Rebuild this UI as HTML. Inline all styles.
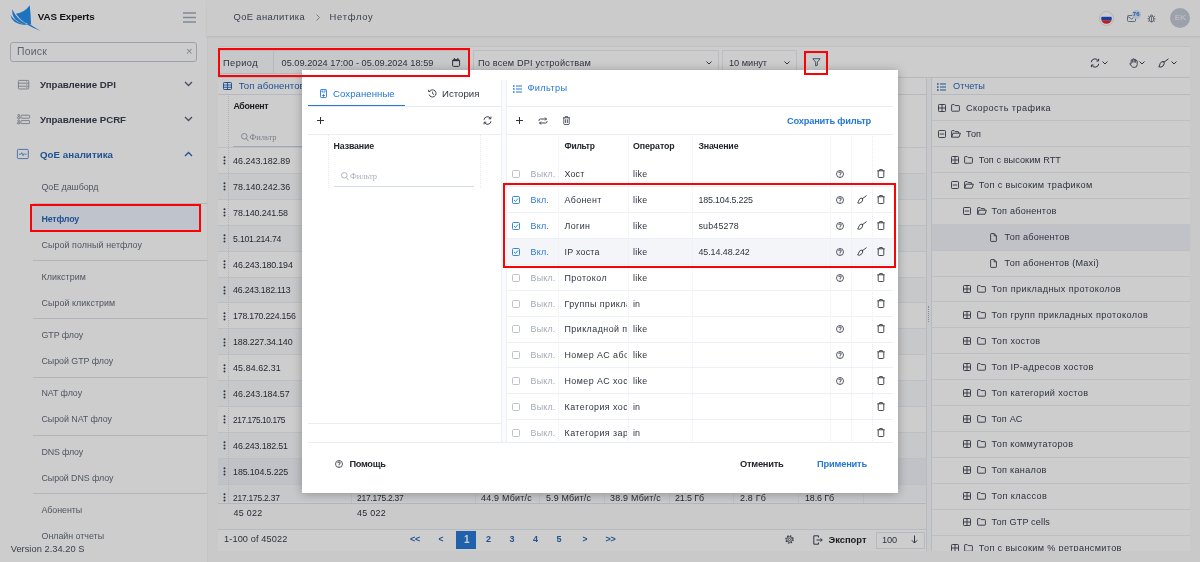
<!DOCTYPE html>
<html lang="ru">
<head>
<meta charset="utf-8">
<title>QoE аналитика - Нетфлоу</title>
<style>
*{box-sizing:border-box;margin:0;padding:0}
html,body{width:1200px;height:562px;overflow:hidden}
body{font-family:"Liberation Sans",sans-serif;font-size:10px;color:#2f3440;background:#fafafb;position:relative}
.abs{position:absolute}
.t{position:absolute;white-space:nowrap;line-height:12px}
svg{position:absolute;overflow:visible}
#side,#head,#card,#modal{will-change:transform}
#side{position:absolute;left:0;top:0;width:207.5px;height:562px;background:#fff;border-right:1.5px solid #f3f3f5}
#side .sep{position:absolute;left:33px;width:174px;height:1px;background:#dfe2e8}
#head{position:absolute;left:207px;top:0;width:993px;height:36px;background:#fdfdfd;box-shadow:0 1px 2px rgba(0,0,0,.09)}
#card{position:absolute;left:218px;top:46px;width:972px;height:505px;background:#fff;overflow:hidden}
#ov{position:absolute;left:0;top:0;width:1200px;height:562px;background:rgba(0,0,0,.195)}
#modal{position:absolute;left:302px;top:70px;width:596px;height:423px;background:#fff;box-shadow:0 1px 9px rgba(0,0,0,.28)}
#modal .in{position:absolute;left:0;top:0;width:100%;height:100%;overflow:hidden}
.red{position:absolute;border:2.2px solid #fb0207}
</style>
</head>
<body>
<div id="side">
<svg style="left:0;top:0" width="45" height="36" viewBox="0 0 45 36"><g fill="#2690ee"><path d="M29.700 5.300Q24.500 12.600 15.900 13.800Q19.800 19.400 24.200 22.300Q27.300 24.200 31.100 24.600Q30.800 14 29.700 5.300Z"/><path d="M28.500 23.200Q34.500 27.600 40.900 30.900Q33 28.300 26.500 24.300Z"/><path d="M12.300 9.300Q15.200 16 20.200 19.900Q23.400 22.400 27.200 24.600L24.300 24.700Q18.600 22.700 15.400 19.500Q11.600 15.600 12.300 9.300Z"/><path d="M10.200 15.100Q13.800 19.600 18 22.100Q21 23.800 25 24.700L25.500 25.200Q19.300 24.900 14.800 22Q11.400 19.700 10.200 15.100Z"/></g></svg>
<div class="t" style="left:37.8px;top:11.2px;font-size:9.8px;color:#15171c;font-weight:700;letter-spacing:-0.13px;">VAS Experts</div>
<svg style="left:183px;top:12px" width="13" height="11" viewBox="0 0 13 11"><path d="M0 1H13M0 5.500H13M0 10H13" stroke="#a4abb8" stroke-width="1.400" fill="none"/></svg>
<div class="abs" style="left:10px;top:42px;width:187px;height:20px;border:1px solid #c3cad6;border-radius:3px"></div>
<div class="t" style="left:17px;top:46px;font-size:10.4px;color:#737b8c;letter-spacing:0.24px;">Поиск</div>
<div class="t" style="left:186px;top:45px;font-size:11px;color:#9aa1ae;">×</div>
<svg style="left:17.800px;top:79.500px" width="11.2" height="9.4" viewBox="0 0 11.2 9.4"><rect x=".4" y=".4" width="10.400" height="8.600" rx="1" fill="none" stroke="#858b9a" stroke-width=".8"/><path d="M.4 3.200H10.800M.4 6.200H10.800" stroke="#858b9a" stroke-width=".8"/><path d="M8.300 1.800H9.300M8.300 4.700H9.300M8.300 7.600H9.300" stroke="#858b9a" stroke-width=".7"/></svg>
<div class="t" style="left:40px;top:78.8px;font-size:9.7px;color:#3b4150;font-weight:700;letter-spacing:-0.01px;">Управление DPI</div>
<svg style="left:184px;top:81px" width="9" height="6" viewBox="0 0 9 6"><path d="M1 1L4.500 4.500L8 1" fill="none" stroke="#5b6170" stroke-width="1.300"/></svg>
<svg style="left:17px;top:114.300px" width="13" height="10.4" viewBox="0 0 13 10.400"><g fill="none" stroke="#858b9a" stroke-width=".8"><rect x="4" y="1.200" width="8.600" height="3" rx=".6"/><rect x="4" y="6.600" width="8.600" height="3" rx=".6"/><circle cx="1.700" cy="1.300" r=".9"/><path d="M.4 4.300V3.600Q.4 2.700 1.700 2.700Q3 2.700 3 3.600V4.300Z"/><circle cx="1.700" cy="6.700" r=".9"/><path d="M.4 9.700V9Q.4 8.100 1.700 8.100Q3 8.100 3 9V9.700Z"/></g></svg>
<div class="t" style="left:40px;top:113.8px;font-size:9.7px;color:#3b4150;font-weight:700;letter-spacing:-0.02px;">Управление PCRF</div>
<svg style="left:184px;top:116px" width="9" height="6" viewBox="0 0 9 6"><path d="M1 1L4.500 4.500L8 1" fill="none" stroke="#5b6170" stroke-width="1.300"/></svg>
<svg style="left:17.300px;top:149px" width="11.7" height="10" viewBox="0 0 11.7 10"><rect x=".4" y=".4" width="10.900" height="9.200" rx="1" fill="none" stroke="#3a78c8" stroke-width=".8"/><path d="M2 5.200H4L4.800 3.600L6 6.700L7 4.600L7.600 5.200H9.700" stroke="#3a78c8" stroke-width=".7" fill="none"/></svg>
<div class="t" style="left:40px;top:148.8px;font-size:9.7px;color:#2a66b8;font-weight:700;letter-spacing:0.06px;">QoE аналитика</div>
<svg style="left:184px;top:151px" width="9" height="6" viewBox="0 0 9 6"><path d="M1 5L4.500 1.500L8 5" fill="none" stroke="#2a66b8" stroke-width="1.300"/></svg>
<div class="t" style="left:41.5px;top:180.5px;font-size:8.9px;color:#666c7a;letter-spacing:-0.04px;">QoE дашборд</div>
<div class="sep" style="top:203px"></div>
<div class="abs" style="left:32px;top:206px;width:168px;height:25px;background:#eef3fd"></div>
<div class="t" style="left:41.5px;top:212.5px;font-size:8.9px;color:#2a66b8;font-weight:700;letter-spacing:-0.20px;">Нетфлоу</div>
<div class="t" style="left:41.5px;top:238.5px;font-size:8.9px;color:#666c7a;letter-spacing:0.09px;">Сырой полный нетфлоу</div>
<div class="sep" style="top:260px"></div>
<div class="t" style="left:41.5px;top:271px;font-size:8.9px;color:#666c7a;letter-spacing:0.06px;">Кликстрим</div>
<div class="t" style="left:41.5px;top:297px;font-size:8.9px;color:#666c7a;letter-spacing:0.07px;">Сырой кликстрим</div>
<div class="sep" style="top:318px"></div>
<div class="t" style="left:41.5px;top:329px;font-size:8.9px;color:#666c7a;letter-spacing:-0.09px;">GTP флоу</div>
<div class="t" style="left:41.5px;top:355px;font-size:8.9px;color:#666c7a;letter-spacing:-0.04px;">Сырой GTP флоу</div>
<div class="sep" style="top:377px"></div>
<div class="t" style="left:41.5px;top:387.3px;font-size:8.9px;color:#666c7a;letter-spacing:-0.07px;">NAT флоу</div>
<div class="t" style="left:41.5px;top:413.4px;font-size:8.9px;color:#666c7a;letter-spacing:-0.05px;">Сырой NAT флоу</div>
<div class="sep" style="top:435px"></div>
<div class="t" style="left:41.5px;top:445.7px;font-size:8.9px;color:#666c7a;letter-spacing:-0.17px;">DNS флоу</div>
<div class="t" style="left:41.5px;top:471.8px;font-size:8.9px;color:#666c7a;letter-spacing:-0.08px;">Сырой DNS флоу</div>
<div class="sep" style="top:493px"></div>
<div class="t" style="left:41.5px;top:504px;font-size:8.9px;color:#666c7a;letter-spacing:-0.08px;">Абоненты</div>
<div class="t" style="left:41.5px;top:529.8px;font-size:8.9px;color:#666c7a;letter-spacing:-0.02px;">Онлайн отчеты</div>
<div class="abs" style="left:0;top:538.500px;width:206px;height:23.500px;background:#fff"></div>
<div class="t" style="left:10.7px;top:543px;font-size:9.3px;color:#4b5160;letter-spacing:0.02px;">Version 2.34.20 S</div>
</div>
<div id="head">
<div class="t" style="left:26.5px;top:11px;font-size:9.4px;color:#4a5060;letter-spacing:0.37px;">QoE аналитика</div>
<svg style="left:109px;top:14.300px" width="4" height="7" viewBox="0 0 4 7"><path d="M.5 .5L3.500 3.500L.5 6.500" fill="none" stroke="#8d93a0" stroke-width=".9"/></svg>
<div class="t" style="left:122.5px;top:11px;font-size:9.4px;color:#4a5060;letter-spacing:0.73px;">Нетфлоу</div>
<svg style="left:892px;top:10.5px" width="15" height="15" viewBox="0 0 15 15"><circle cx="7.500" cy="7.500" r="7" fill="#fff" stroke="#c9ced8" stroke-width=".6"/><clipPath id="fc"><circle cx="7.500" cy="7.500" r="5.300"/></clipPath><g clip-path="url(#fc)"><rect x="0" y="0" width="15" height="5.800" fill="#fff"/><rect x="0" y="5.800" width="15" height="3.400" fill="#1f4fc4"/><rect x="0" y="9.200" width="15" height="6" fill="#e0282e"/></g></svg>
<svg style="left:920px;top:15px" width="9" height="7" viewBox="0 0 9 7"><rect x=".5" y=".5" width="8" height="6" rx="1" fill="none" stroke="#6b7282" stroke-width=".9"/><path d="M1 1.500L4.500 4L8 1.500" fill="none" stroke="#6b7282" stroke-width=".9"/></svg>
<div class="abs" style="left:924.5px;top:10px;width:9px;height:9px;border-radius:50%;background:#d5e6fb"></div>
<div class="t" style="left:925.8px;top:8.2px;font-size:6px;color:#2f73d0;font-weight:700;">76</div>
<svg style="left:939.5px;top:13px" width="9" height="10" viewBox="0 0 9 10"><ellipse cx="4.500" cy="6" rx="2.300" ry="3" fill="none" stroke="#6b7282" stroke-width=".9"/><path d="M3 2.800Q4.500 .8 6 2.800M.5 5.800H2.200M6.800 5.800H8.500M1 8.500L2.500 7.500M8 8.500L6.500 7.500M1 3L2.500 4M8 3L6.500 4M4.500 3.500V9" fill="none" stroke="#6b7282" stroke-width=".8"/></svg>
<div class="abs" style="left:962.7px;top:7.7px;width:20.600px;height:20.600px;border-radius:50%;background:#c3c9d6"></div>
<div class="t" style="left:967.8px;top:12px;font-size:8px;color:#e6e9ef;font-weight:700;">EK</div>
</div>
<div id="card">
<div class="abs" style="left:0;top:0;width:972px;height:1px;background:#eef0f4"></div>
<div class="abs" style="left:0;top:4px;width:251px;height:24px;background:#f8f9fb;border:1px solid #e3e6ec"></div>
<div class="abs" style="left:55px;top:4px;width:1px;height:24px;background:#e3e6ec"></div>
<div class="t" style="left:5px;top:10.8px;font-size:9.2px;color:#3b4150;letter-spacing:0.46px;">Период</div>
<div class="t" style="left:63.5px;top:10.8px;font-size:9.2px;color:#3b4150;letter-spacing:0.02px;">05.09.2024 17:00 - 05.09.2024 18:59</div>
<svg style="left:233.8px;top:11.8px" width="8.2" height="9" viewBox="0 0 8.2 9"><rect x=".6" y="1.600" width="7" height="6.800" rx="1" fill="none" stroke="#3b4150" stroke-width="1"/><path d="M.6 2.600H7.600" stroke="#3b4150" stroke-width="1.200"/><path d="M2.400 0V1.800M5.800 0V1.800" stroke="#3b4150" stroke-width="1"/></svg>
<div class="abs" style="left:255px;top:4px;width:246px;height:24px;border:1px solid #e9ebf0"></div>
<div class="t" style="left:260px;top:10.8px;font-size:9.2px;color:#3b4150;letter-spacing:0.17px;">По всем DPI устройствам</div>
<svg style="left:488px;top:15px" width="6" height="4" viewBox="0 0 6 4"><path d="M.5 .5L3 3L5.5 .5" fill="none" stroke="#3b4150" stroke-width="1"/></svg>
<div class="abs" style="left:504px;top:4px;width:75px;height:24px;border:1px solid #e9ebf0"></div>
<div class="t" style="left:511px;top:10.8px;font-size:9.2px;color:#3b4150;letter-spacing:-0.01px;">10 минут</div>
<svg style="left:566px;top:15px" width="6" height="4" viewBox="0 0 6 4"><path d="M.5 .5L3 3L5.5 .5" fill="none" stroke="#3b4150" stroke-width="1"/></svg>
<svg style="left:593.6px;top:12.4px" width="9" height="8.6" viewBox="0 0 10 10"><path d="M.8 .8H9.200L6 4.800V8.500L4 9.200V4.800Z" fill="none" stroke="#465066" stroke-width="1" stroke-linejoin="round"/></svg>
<svg style="left:872px;top:12px" width="10" height="10" viewBox="0 0 10 10"><path d="M1.200 4.200A3.800 3.800 0 0 1 8.300 2.800M8.800 5.800A3.800 3.800 0 0 1 1.700 7.200M8.600 .8V3H6.400M1.400 9.200V7H3.600" fill="none" stroke="#3b4150" stroke-width="1"/></svg>
<svg style="left:884px;top:15px" width="6" height="4" viewBox="0 0 6 4"><path d="M.5 .5L3 3L5.5 .5" fill="none" stroke="#3b4150" stroke-width="1"/></svg>
<svg style="left:911px;top:11.5px" width="9" height="10" viewBox="0 0 9 10"><path d="M2.200 5.600V2.400A.75 .75 0 0 1 3.700 2.400V4.600M3.700 2.400V1.500A.75 .75 0 0 1 5.200 1.500V4.600M5.200 2A.75 .75 0 0 1 6.700 2V4.600M6.700 3.200A.75 .75 0 0 1 8.200 3.200V6.500Q8.200 9.400 5.500 9.400H5Q3.300 9.400 2.300 7.900L.8 5.700Q1.500 4.900 2.200 5.700" fill="none" stroke="#3b4150" stroke-width=".9" stroke-linejoin="round"/></svg>
<svg style="left:921px;top:15px" width="6" height="4" viewBox="0 0 6 4"><path d="M.5 .5L3 3L5.5 .5" fill="none" stroke="#3b4150" stroke-width="1"/></svg>
<svg style="left:940px;top:12px" width="11" height="10" viewBox="0 0 11 10"><path d="M10.500 .8L5.500 4.500M5.800 3.500Q7.200 5.500 5 8Q3 9.800 .8 8.800Q1.800 7 2.200 5.500Q3 3.200 5.800 3.500Z" fill="none" stroke="#3b4150" stroke-width="1"/></svg>
<svg style="left:953px;top:15px" width="6" height="4" viewBox="0 0 6 4"><path d="M.5 .5L3 3L5.5 .5" fill="none" stroke="#3b4150" stroke-width="1"/></svg>
<div class="abs" style="left:0;top:31px;width:972px;height:1px;background:#e3e6ec"></div>
<svg style="left:5px;top:36px" width="9" height="8" viewBox="0 0 9 8"><rect x=".5" y=".5" width="8" height="7" rx=".8" fill="none" stroke="#2a66b8" stroke-width="1"/><path d="M.5 3H8.500M.5 5.300H8.500M4.500 .5V7.500" stroke="#2a66b8" stroke-width=".9"/></svg>
<div class="t" style="left:20.7px;top:34px;font-size:9.6px;color:#2a66b8;letter-spacing:0.07px;">Топ абонентов</div>
<div class="abs" style="left:0;top:47.5px;width:708px;height:1px;background:#e3e6ec"></div>
<div class="t" style="left:15.4px;top:53.8px;font-size:8.8px;color:#23262d;font-weight:700;letter-spacing:-0.27px;">Абонент</div>
<svg style="left:23.2px;top:86.5px" width="8" height="9" viewBox="0 0 8 9"><circle cx="3.300" cy="3.300" r="2.800" fill="none" stroke="#9aa1ae" stroke-width=".9"/><path d="M5.300 5.400L7.500 8.200" stroke="#9aa1ae" stroke-width=".9"/></svg>
<div class="t" style="left:31.6px;top:85px;font-size:8.5px;color:#9aa1ae;font-family:'Liberation Serif',serif;letter-spacing:-0.02px;">Фильтр</div>
<div class="abs" style="left:15px;top:99.5px;width:110px;height:1px;background:#c9d2e4"></div>
<div class="abs" style="left:0;top:101.0px;width:708px;height:25.9px;border-top:1px solid #eceef2"></div>
<svg style="left:4.5px;top:110.4px" width="3" height="9" viewBox="0 0 3 9"><circle cx="1.500" cy="1.200" r="1" fill="#3b4150"/><circle cx="1.500" cy="4.400" r="1" fill="#3b4150"/><circle cx="1.500" cy="7.600" r="1" fill="#3b4150"/></svg>
<div class="t" style="left:15.1px;top:108.9px;font-size:8.9px;color:#2f3440;letter-spacing:0.02px;">46.243.182.89</div>
<div class="abs" style="left:0;top:126.9px;width:708px;height:25.9px;background:#f8f9fb;border-top:1px solid #eceef2"></div>
<svg style="left:4.5px;top:136.3px" width="3" height="9" viewBox="0 0 3 9"><circle cx="1.500" cy="1.200" r="1" fill="#3b4150"/><circle cx="1.500" cy="4.400" r="1" fill="#3b4150"/><circle cx="1.500" cy="7.600" r="1" fill="#3b4150"/></svg>
<div class="t" style="left:15.1px;top:134.8px;font-size:8.9px;color:#2f3440;letter-spacing:0.02px;">78.140.242.36</div>
<div class="abs" style="left:0;top:152.8px;width:708px;height:25.9px;border-top:1px solid #eceef2"></div>
<svg style="left:4.5px;top:162.2px" width="3" height="9" viewBox="0 0 3 9"><circle cx="1.500" cy="1.200" r="1" fill="#3b4150"/><circle cx="1.500" cy="4.400" r="1" fill="#3b4150"/><circle cx="1.500" cy="7.600" r="1" fill="#3b4150"/></svg>
<div class="t" style="left:15.1px;top:160.7px;font-size:8.9px;color:#2f3440;letter-spacing:-0.15px;">78.140.241.58</div>
<div class="abs" style="left:0;top:178.7px;width:708px;height:25.9px;background:#f8f9fb;border-top:1px solid #eceef2"></div>
<svg style="left:4.5px;top:188.1px" width="3" height="9" viewBox="0 0 3 9"><circle cx="1.500" cy="1.200" r="1" fill="#3b4150"/><circle cx="1.500" cy="4.400" r="1" fill="#3b4150"/><circle cx="1.500" cy="7.600" r="1" fill="#3b4150"/></svg>
<div class="t" style="left:15.1px;top:186.6px;font-size:8.69px;color:#2f3440;letter-spacing:-0.22px;">5.101.214.74</div>
<div class="abs" style="left:0;top:204.6px;width:708px;height:25.9px;border-top:1px solid #eceef2"></div>
<svg style="left:4.5px;top:214.0px" width="3" height="9" viewBox="0 0 3 9"><circle cx="1.500" cy="1.200" r="1" fill="#3b4150"/><circle cx="1.500" cy="4.400" r="1" fill="#3b4150"/><circle cx="1.500" cy="7.600" r="1" fill="#3b4150"/></svg>
<div class="t" style="left:15.1px;top:212.5px;font-size:8.9px;color:#2f3440;letter-spacing:-0.15px;">46.243.180.194</div>
<div class="abs" style="left:0;top:230.5px;width:708px;height:25.9px;background:#f8f9fb;border-top:1px solid #eceef2"></div>
<svg style="left:4.5px;top:239.9px" width="3" height="9" viewBox="0 0 3 9"><circle cx="1.500" cy="1.200" r="1" fill="#3b4150"/><circle cx="1.500" cy="4.400" r="1" fill="#3b4150"/><circle cx="1.500" cy="7.600" r="1" fill="#3b4150"/></svg>
<div class="t" style="left:15.1px;top:238.4px;font-size:8.80px;color:#2f3440;letter-spacing:-0.23px;">46.243.182.113</div>
<div class="abs" style="left:0;top:256.4px;width:708px;height:25.9px;border-top:1px solid #eceef2"></div>
<svg style="left:4.5px;top:265.8px" width="3" height="9" viewBox="0 0 3 9"><circle cx="1.500" cy="1.200" r="1" fill="#3b4150"/><circle cx="1.500" cy="4.400" r="1" fill="#3b4150"/><circle cx="1.500" cy="7.600" r="1" fill="#3b4150"/></svg>
<div class="t" style="left:15.1px;top:264.3px;font-size:8.79px;color:#2f3440;letter-spacing:-0.23px;">178.170.224.156</div>
<div class="abs" style="left:0;top:282.3px;width:708px;height:25.9px;background:#f8f9fb;border-top:1px solid #eceef2"></div>
<svg style="left:4.5px;top:291.7px" width="3" height="9" viewBox="0 0 3 9"><circle cx="1.500" cy="1.200" r="1" fill="#3b4150"/><circle cx="1.500" cy="4.400" r="1" fill="#3b4150"/><circle cx="1.500" cy="7.600" r="1" fill="#3b4150"/></svg>
<div class="t" style="left:15.1px;top:290.2px;font-size:8.9px;color:#2f3440;letter-spacing:-0.17px;">188.227.34.140</div>
<div class="abs" style="left:0;top:308.2px;width:708px;height:25.9px;border-top:1px solid #eceef2"></div>
<svg style="left:4.5px;top:317.6px" width="3" height="9" viewBox="0 0 3 9"><circle cx="1.500" cy="1.200" r="1" fill="#3b4150"/><circle cx="1.500" cy="4.400" r="1" fill="#3b4150"/><circle cx="1.500" cy="7.600" r="1" fill="#3b4150"/></svg>
<div class="t" style="left:15.1px;top:316.1px;font-size:8.9px;color:#2f3440;letter-spacing:0.07px;">45.84.62.31</div>
<div class="abs" style="left:0;top:334.1px;width:708px;height:25.9px;background:#f8f9fb;border-top:1px solid #eceef2"></div>
<svg style="left:4.5px;top:343.5px" width="3" height="9" viewBox="0 0 3 9"><circle cx="1.500" cy="1.200" r="1" fill="#3b4150"/><circle cx="1.500" cy="4.400" r="1" fill="#3b4150"/><circle cx="1.500" cy="7.600" r="1" fill="#3b4150"/></svg>
<div class="t" style="left:15.1px;top:342.0px;font-size:8.9px;color:#2f3440;letter-spacing:-0.01px;">46.243.184.57</div>
<div class="abs" style="left:0;top:360.0px;width:708px;height:25.9px;border-top:1px solid #eceef2"></div>
<svg style="left:4.5px;top:369.4px" width="3" height="9" viewBox="0 0 3 9"><circle cx="1.500" cy="1.200" r="1" fill="#3b4150"/><circle cx="1.500" cy="4.400" r="1" fill="#3b4150"/><circle cx="1.500" cy="7.600" r="1" fill="#3b4150"/></svg>
<div class="t" style="left:15.1px;top:367.9px;font-size:8.37px;color:#2f3440;letter-spacing:-0.44px;">217.175.10.175</div>
<div class="abs" style="left:0;top:385.9px;width:708px;height:25.9px;background:#f8f9fb;border-top:1px solid #eceef2"></div>
<svg style="left:4.5px;top:395.3px" width="3" height="9" viewBox="0 0 3 9"><circle cx="1.500" cy="1.200" r="1" fill="#3b4150"/><circle cx="1.500" cy="4.400" r="1" fill="#3b4150"/><circle cx="1.500" cy="7.600" r="1" fill="#3b4150"/></svg>
<div class="t" style="left:15.1px;top:393.8px;font-size:8.9px;color:#2f3440;letter-spacing:-0.15px;">46.243.182.51</div>
<div class="abs" style="left:0;top:411.8px;width:708px;height:25.9px;background:#eff2f9;border-top:1px solid #eceef2"></div>
<svg style="left:4.5px;top:421.2px" width="3" height="9" viewBox="0 0 3 9"><circle cx="1.500" cy="1.200" r="1" fill="#3b4150"/><circle cx="1.500" cy="4.400" r="1" fill="#3b4150"/><circle cx="1.500" cy="7.600" r="1" fill="#3b4150"/></svg>
<div class="t" style="left:15.1px;top:419.7px;font-size:8.9px;color:#2f3440;letter-spacing:-0.14px;">185.104.5.225</div>
<div class="abs" style="left:0;top:437.7px;width:708px;height:18px;background:#f8f9fb;border-top:1px solid #eceef2"></div>
<svg style="left:4.5px;top:447.1px" width="3" height="9" viewBox="0 0 3 9"><circle cx="1.500" cy="1.200" r="1" fill="#3b4150"/><circle cx="1.500" cy="4.400" r="1" fill="#3b4150"/><circle cx="1.500" cy="7.600" r="1" fill="#3b4150"/></svg>
<div class="t" style="left:15.1px;top:445.6px;font-size:8.43px;color:#2f3440;letter-spacing:-0.22px;">217.175.2.37</div>
<div class="t" style="left:139px;top:445.5px;font-size:8.43px;color:#2f3440;letter-spacing:-0.22px;">217.175.2.37</div>
<div class="t" style="left:263px;top:445.5px;font-size:8.9px;color:#2f3440;letter-spacing:0.26px;">44.9 Мбит/с</div>
<div class="t" style="left:328px;top:445.5px;font-size:8.9px;color:#2f3440;letter-spacing:0.18px;">5.9 Мбит/с</div>
<div class="t" style="left:392px;top:445.5px;font-size:8.9px;color:#2f3440;letter-spacing:0.26px;">38.9 Мбит/с</div>
<div class="t" style="left:457px;top:445.5px;font-size:8.9px;color:#2f3440;letter-spacing:-0.09px;">21.5 Гб</div>
<div class="t" style="left:522px;top:445.5px;font-size:8.9px;color:#2f3440;letter-spacing:0.22px;">2.8 Гб</div>
<div class="t" style="left:587px;top:445.5px;font-size:8.9px;color:#2f3440;letter-spacing:-0.09px;">18.6 Гб</div>
<div class="abs" style="left:10.2px;top:48px;width:0;height:409px;border-left:1px dotted #dcdfe6"></div>
<div class="abs" style="left:133px;top:438px;width:0;height:19px;border-left:1px dotted #e1e4ea"></div>
<div class="abs" style="left:257px;top:438px;width:0;height:19px;border-left:1px dotted #e1e4ea"></div>
<div class="abs" style="left:321px;top:438px;width:0;height:19px;border-left:1px dotted #e1e4ea"></div>
<div class="abs" style="left:386px;top:438px;width:0;height:19px;border-left:1px dotted #e1e4ea"></div>
<div class="abs" style="left:451px;top:438px;width:0;height:19px;border-left:1px dotted #e1e4ea"></div>
<div class="abs" style="left:515px;top:438px;width:0;height:19px;border-left:1px dotted #e1e4ea"></div>
<div class="abs" style="left:580px;top:438px;width:0;height:19px;border-left:1px dotted #e1e4ea"></div>
<div class="abs" style="left:645px;top:438px;width:0;height:19px;border-left:1px dotted #e1e4ea"></div>
<div class="abs" style="left:0;top:456.5px;width:708px;height:27px;background:#fcfcfd;border-top:1px solid #dfe2e8;border-bottom:1px solid #e6e8ee"></div>
<div class="t" style="left:15.4px;top:461.3px;font-size:8.9px;color:#2f3440;letter-spacing:0.31px;">45 022</div>
<div class="t" style="left:139px;top:461.3px;font-size:8.9px;color:#2f3440;letter-spacing:0.31px;">45 022</div>
<div class="t" style="left:6px;top:487px;font-size:9.2px;color:#3b4150;letter-spacing:0.12px;">1-100 of 45022</div>
<div class="t" style="left:192px;top:487px;font-size:9px;color:#2a66b8;font-weight:700;letter-spacing:-0.26px;">&lt;&lt;</div>
<div class="t" style="left:220.5px;top:487px;font-size:8.46px;color:#2a66b8;font-weight:700;letter-spacing:-0.44px;">&lt;</div>
<div class="t" style="left:268px;top:487px;font-size:9px;color:#2a66b8;font-weight:700;letter-spacing:0.48px;">2</div>
<div class="t" style="left:291.5px;top:487px;font-size:9px;color:#2a66b8;font-weight:700;letter-spacing:0.48px;">3</div>
<div class="t" style="left:315px;top:487px;font-size:9px;color:#2a66b8;font-weight:700;letter-spacing:0.98px;">4</div>
<div class="t" style="left:338.5px;top:487px;font-size:9px;color:#2a66b8;font-weight:700;letter-spacing:0.48px;">5</div>
<div class="t" style="left:364.5px;top:487px;font-size:8.46px;color:#2a66b8;font-weight:700;letter-spacing:-0.44px;">&gt;</div>
<div class="t" style="left:387.5px;top:487px;font-size:9px;color:#2a66b8;font-weight:700;letter-spacing:-0.26px;">&gt;&gt;</div>
<div class="abs" style="left:238px;top:485px;width:20px;height:18px;background:#2779d4"></div>
<div class="t" style="left:246px;top:488px;font-size:10px;color:#fff;font-weight:700;">1</div>
<svg style="left:567px;top:489px" width="9" height="9" viewBox="0 0 9 9"><circle cx="4.500" cy="4.500" r="3.600" fill="none" stroke="#3b4150" stroke-width="1.300" stroke-dasharray="1.500 1.330"/><circle cx="4.500" cy="4.500" r="2.700" fill="none" stroke="#3b4150" stroke-width=".8"/><circle cx="4.500" cy="4.500" r="1.100" fill="none" stroke="#3b4150" stroke-width=".8"/></svg>
<svg style="left:595px;top:489px" width="10" height="10" viewBox="0 0 10 10"><path d="M5.500 2.500V.8H.8V9.200H5.500V7.500M3.500 5H9.200M7.500 3.300L9.200 5L7.500 6.700" fill="none" stroke="#3b4150" stroke-width="1"/></svg>
<div class="t" style="left:610.5px;top:487.5px;font-size:9.4px;color:#23262d;font-weight:700;letter-spacing:-0.01px;">Экспорт</div>
<div class="abs" style="left:658px;top:485.5px;width:48.500px;height:17.500px;border:1px solid #e3e6ec"></div>
<div class="t" style="left:664px;top:488px;font-size:9.2px;color:#3b4150;letter-spacing:-0.11px;">100</div>
<svg style="left:693px;top:489px" width="7" height="9" viewBox="0 0 7 9"><path d="M3.500 .5V8M.8 5.300L3.500 8L6.200 5.300" fill="none" stroke="#3b4150" stroke-width="1"/></svg>
<div class="abs" style="left:708px;top:32px;width:6px;height:473px;background:#f8f9fa;border-left:1px solid #e6e8ee;border-right:1px solid #e6e8ee"></div>
<div class="abs" style="left:710px;top:260px;width:2px;height:16px;border-left:1px dotted #a5acba"></div>
<svg style="left:719px;top:36.5px" width="9" height="8" viewBox="0 0 9 8"><path d="M3 1H9M3 4H9M3 7H9" stroke="#2a66b8" stroke-width="1.100"/><path d="M0 1H1.600M0 4H1.600M0 7H1.600" stroke="#2a66b8" stroke-width="1.300"/></svg>
<div class="t" style="left:735px;top:34.4px;font-size:9.2px;color:#2a66b8;letter-spacing:0.04px;">Отчеты</div>
<div class="abs" style="left:714px;top:48px;width:258px;height:1px;background:#e3e6ec"></div>
<div class="abs" style="left:714px;top:74.1px;width:258px;height:1px;background:#eceef2"></div>
<svg style="left:719.8px;top:57.7px" width="8" height="8" viewBox="0 0 8 8"><rect x=".5" y=".5" width="7" height="7" rx=".8" fill="none" stroke="#3b4150" stroke-width=".9"/><path d="M.5 4H7.5M4 .5V7.5" stroke="#3b4150" stroke-width=".9"/></svg>
<svg style="left:733.3px;top:57.7px" width="9" height="8" viewBox="0 0 9 8"><path d="M.6 6.600V1.200Q.6 .6 1.200 .6H3.200L4.200 1.600H7.800Q8.400 1.600 8.400 2.200V6.600Q8.400 7.200 7.800 7.200H1.200Q.6 7.200 .6 6.600Z" fill="none" stroke="#3b4150" stroke-width=".9" stroke-linejoin="round"/></svg>
<div class="t" style="left:748.0px;top:55.7px;font-size:9.1px;color:#3b4150;letter-spacing:0.45px;">Скорость трафика</div>
<div class="abs" style="left:714px;top:100.0px;width:258px;height:1px;background:#eceef2"></div>
<svg style="left:719.8px;top:83.6px" width="8" height="8" viewBox="0 0 8 8"><rect x=".5" y=".5" width="7" height="7" rx=".8" fill="none" stroke="#3b4150" stroke-width=".9"/><path d="M1.8 4H6.2" stroke="#3b4150" stroke-width=".9"/></svg>
<svg style="left:733.3px;top:83.6px" width="10" height="8" viewBox="0 0 10 8"><path d="M.6 7.200V1.200Q.6 .6 1.200 .6H3.200L4.200 1.600H7Q7.600 1.600 7.600 2.200V3.200M.6 7.200L2 3.200H9.400L8 7.200Z" fill="none" stroke="#3b4150" stroke-width=".9" stroke-linejoin="round"/></svg>
<div class="t" style="left:748.0px;top:81.6px;font-size:9.1px;color:#3b4150;letter-spacing:0.06px;">Топ</div>
<div class="abs" style="left:714px;top:125.9px;width:258px;height:1px;background:#eceef2"></div>
<svg style="left:732.6px;top:109.5px" width="8" height="8" viewBox="0 0 8 8"><rect x=".5" y=".5" width="7" height="7" rx=".8" fill="none" stroke="#3b4150" stroke-width=".9"/><path d="M.5 4H7.5M4 .5V7.5" stroke="#3b4150" stroke-width=".9"/></svg>
<svg style="left:746.1px;top:109.5px" width="9" height="8" viewBox="0 0 9 8"><path d="M.6 6.600V1.200Q.6 .6 1.200 .6H3.200L4.200 1.600H7.800Q8.400 1.600 8.400 2.200V6.600Q8.400 7.200 7.800 7.200H1.200Q.6 7.200 .6 6.600Z" fill="none" stroke="#3b4150" stroke-width=".9" stroke-linejoin="round"/></svg>
<div class="t" style="left:760.8px;top:107.5px;font-size:9.1px;color:#3b4150;letter-spacing:0.08px;">Топ с высоким RTT</div>
<div class="abs" style="left:714px;top:151.8px;width:258px;height:1px;background:#eceef2"></div>
<svg style="left:732.6px;top:135.4px" width="8" height="8" viewBox="0 0 8 8"><rect x=".5" y=".5" width="7" height="7" rx=".8" fill="none" stroke="#3b4150" stroke-width=".9"/><path d="M1.8 4H6.2" stroke="#3b4150" stroke-width=".9"/></svg>
<svg style="left:746.1px;top:135.4px" width="10" height="8" viewBox="0 0 10 8"><path d="M.6 7.200V1.200Q.6 .6 1.200 .6H3.200L4.200 1.600H7Q7.600 1.600 7.600 2.200V3.200M.6 7.200L2 3.200H9.400L8 7.200Z" fill="none" stroke="#3b4150" stroke-width=".9" stroke-linejoin="round"/></svg>
<div class="t" style="left:760.8px;top:133.4px;font-size:9.1px;color:#3b4150;letter-spacing:0.37px;">Топ с высоким трафиком</div>
<div class="abs" style="left:714px;top:177.7px;width:258px;height:1px;background:#eceef2"></div>
<svg style="left:745.4px;top:161.3px" width="8" height="8" viewBox="0 0 8 8"><rect x=".5" y=".5" width="7" height="7" rx=".8" fill="none" stroke="#3b4150" stroke-width=".9"/><path d="M1.8 4H6.2" stroke="#3b4150" stroke-width=".9"/></svg>
<svg style="left:758.9px;top:161.3px" width="10" height="8" viewBox="0 0 10 8"><path d="M.6 7.200V1.200Q.6 .6 1.200 .6H3.200L4.200 1.600H7Q7.600 1.600 7.600 2.200V3.200M.6 7.200L2 3.200H9.400L8 7.200Z" fill="none" stroke="#3b4150" stroke-width=".9" stroke-linejoin="round"/></svg>
<div class="t" style="left:773.6px;top:159.3px;font-size:9.1px;color:#3b4150;letter-spacing:0.25px;">Топ абонентов</div>
<div class="abs" style="left:714px;top:178.2px;width:258px;height:25.9px;background:#eff2f9"></div>
<div class="abs" style="left:714px;top:203.6px;width:258px;height:1px;background:#eceef2"></div>
<svg style="left:771.8px;top:186.7px" width="7" height="9" viewBox="0 0 7 9"><path d="M.6 1.200Q.6 .6 1.200 .6H4.200L6.400 2.800V7.800Q6.400 8.400 5.800 8.400H1.200Q.6 8.400 .6 7.800ZM4.200 .6V2.800H6.400" fill="none" stroke="#3b4150" stroke-width=".9" stroke-linejoin="round"/></svg>
<div class="t" style="left:786.6px;top:185.2px;font-size:9.1px;color:#3b4150;letter-spacing:0.25px;">Топ абонентов</div>
<div class="abs" style="left:714px;top:229.5px;width:258px;height:1px;background:#eceef2"></div>
<svg style="left:771.8px;top:212.6px" width="7" height="9" viewBox="0 0 7 9"><path d="M.6 1.200Q.6 .6 1.200 .6H4.200L6.400 2.800V7.800Q6.400 8.400 5.800 8.400H1.200Q.6 8.400 .6 7.800ZM4.200 .6V2.800H6.400" fill="none" stroke="#3b4150" stroke-width=".9" stroke-linejoin="round"/></svg>
<div class="t" style="left:786.6px;top:211.1px;font-size:9.1px;color:#3b4150;letter-spacing:0.24px;">Топ абонентов (Maxi)</div>
<div class="abs" style="left:714px;top:255.4px;width:258px;height:1px;background:#eceef2"></div>
<svg style="left:745.4px;top:239.0px" width="8" height="8" viewBox="0 0 8 8"><rect x=".5" y=".5" width="7" height="7" rx=".8" fill="none" stroke="#3b4150" stroke-width=".9"/><path d="M.5 4H7.5M4 .5V7.5" stroke="#3b4150" stroke-width=".9"/></svg>
<svg style="left:758.9px;top:239.0px" width="9" height="8" viewBox="0 0 9 8"><path d="M.6 6.600V1.200Q.6 .6 1.200 .6H3.200L4.200 1.600H7.800Q8.400 1.600 8.400 2.200V6.600Q8.400 7.200 7.800 7.200H1.200Q.6 7.200 .6 6.600Z" fill="none" stroke="#3b4150" stroke-width=".9" stroke-linejoin="round"/></svg>
<div class="t" style="left:773.6px;top:237.0px;font-size:9.1px;color:#3b4150;letter-spacing:0.42px;">Топ прикладных протоколов</div>
<div class="abs" style="left:714px;top:281.3px;width:258px;height:1px;background:#eceef2"></div>
<svg style="left:745.4px;top:264.9px" width="8" height="8" viewBox="0 0 8 8"><rect x=".5" y=".5" width="7" height="7" rx=".8" fill="none" stroke="#3b4150" stroke-width=".9"/><path d="M.5 4H7.5M4 .5V7.5" stroke="#3b4150" stroke-width=".9"/></svg>
<svg style="left:758.9px;top:264.9px" width="9" height="8" viewBox="0 0 9 8"><path d="M.6 6.600V1.200Q.6 .6 1.200 .6H3.200L4.200 1.600H7.800Q8.400 1.600 8.400 2.200V6.600Q8.400 7.200 7.800 7.200H1.200Q.6 7.200 .6 6.600Z" fill="none" stroke="#3b4150" stroke-width=".9" stroke-linejoin="round"/></svg>
<div class="t" style="left:773.6px;top:262.9px;font-size:9.1px;color:#3b4150;letter-spacing:0.40px;">Топ групп прикладных протоколов</div>
<div class="abs" style="left:714px;top:307.2px;width:258px;height:1px;background:#eceef2"></div>
<svg style="left:745.4px;top:290.8px" width="8" height="8" viewBox="0 0 8 8"><rect x=".5" y=".5" width="7" height="7" rx=".8" fill="none" stroke="#3b4150" stroke-width=".9"/><path d="M.5 4H7.5M4 .5V7.5" stroke="#3b4150" stroke-width=".9"/></svg>
<svg style="left:758.9px;top:290.8px" width="9" height="8" viewBox="0 0 9 8"><path d="M.6 6.600V1.200Q.6 .6 1.200 .6H3.200L4.200 1.600H7.800Q8.400 1.600 8.400 2.200V6.600Q8.400 7.200 7.800 7.200H1.200Q.6 7.200 .6 6.600Z" fill="none" stroke="#3b4150" stroke-width=".9" stroke-linejoin="round"/></svg>
<div class="t" style="left:773.6px;top:288.8px;font-size:9.1px;color:#3b4150;letter-spacing:0.36px;">Топ хостов</div>
<div class="abs" style="left:714px;top:333.1px;width:258px;height:1px;background:#eceef2"></div>
<svg style="left:745.4px;top:316.7px" width="8" height="8" viewBox="0 0 8 8"><rect x=".5" y=".5" width="7" height="7" rx=".8" fill="none" stroke="#3b4150" stroke-width=".9"/><path d="M.5 4H7.5M4 .5V7.5" stroke="#3b4150" stroke-width=".9"/></svg>
<svg style="left:758.9px;top:316.7px" width="9" height="8" viewBox="0 0 9 8"><path d="M.6 6.600V1.200Q.6 .6 1.200 .6H3.200L4.200 1.600H7.800Q8.400 1.600 8.400 2.200V6.600Q8.400 7.200 7.800 7.200H1.200Q.6 7.200 .6 6.600Z" fill="none" stroke="#3b4150" stroke-width=".9" stroke-linejoin="round"/></svg>
<div class="t" style="left:773.6px;top:314.7px;font-size:9.1px;color:#3b4150;letter-spacing:0.36px;">Топ IP-адресов хостов</div>
<div class="abs" style="left:714px;top:359.0px;width:258px;height:1px;background:#eceef2"></div>
<svg style="left:745.4px;top:342.6px" width="8" height="8" viewBox="0 0 8 8"><rect x=".5" y=".5" width="7" height="7" rx=".8" fill="none" stroke="#3b4150" stroke-width=".9"/><path d="M.5 4H7.5M4 .5V7.5" stroke="#3b4150" stroke-width=".9"/></svg>
<svg style="left:758.9px;top:342.6px" width="9" height="8" viewBox="0 0 9 8"><path d="M.6 6.600V1.200Q.6 .6 1.200 .6H3.200L4.200 1.600H7.800Q8.400 1.600 8.400 2.200V6.600Q8.400 7.200 7.800 7.200H1.200Q.6 7.200 .6 6.600Z" fill="none" stroke="#3b4150" stroke-width=".9" stroke-linejoin="round"/></svg>
<div class="t" style="left:773.6px;top:340.6px;font-size:9.1px;color:#3b4150;letter-spacing:0.37px;">Топ категорий хостов</div>
<div class="abs" style="left:714px;top:384.9px;width:258px;height:1px;background:#eceef2"></div>
<svg style="left:745.4px;top:368.5px" width="8" height="8" viewBox="0 0 8 8"><rect x=".5" y=".5" width="7" height="7" rx=".8" fill="none" stroke="#3b4150" stroke-width=".9"/><path d="M.5 4H7.5M4 .5V7.5" stroke="#3b4150" stroke-width=".9"/></svg>
<svg style="left:758.9px;top:368.5px" width="9" height="8" viewBox="0 0 9 8"><path d="M.6 6.600V1.200Q.6 .6 1.200 .6H3.200L4.200 1.600H7.800Q8.400 1.600 8.400 2.200V6.600Q8.400 7.200 7.800 7.200H1.200Q.6 7.200 .6 6.600Z" fill="none" stroke="#3b4150" stroke-width=".9" stroke-linejoin="round"/></svg>
<div class="t" style="left:773.6px;top:366.5px;font-size:9.1px;color:#3b4150;letter-spacing:0.17px;">Топ АС</div>
<div class="abs" style="left:714px;top:410.8px;width:258px;height:1px;background:#eceef2"></div>
<svg style="left:745.4px;top:394.4px" width="8" height="8" viewBox="0 0 8 8"><rect x=".5" y=".5" width="7" height="7" rx=".8" fill="none" stroke="#3b4150" stroke-width=".9"/><path d="M.5 4H7.5M4 .5V7.5" stroke="#3b4150" stroke-width=".9"/></svg>
<svg style="left:758.9px;top:394.4px" width="9" height="8" viewBox="0 0 9 8"><path d="M.6 6.600V1.200Q.6 .6 1.200 .6H3.200L4.200 1.600H7.800Q8.400 1.600 8.400 2.200V6.600Q8.400 7.200 7.800 7.200H1.200Q.6 7.200 .6 6.600Z" fill="none" stroke="#3b4150" stroke-width=".9" stroke-linejoin="round"/></svg>
<div class="t" style="left:773.6px;top:392.4px;font-size:9.1px;color:#3b4150;letter-spacing:0.32px;">Топ коммутаторов</div>
<div class="abs" style="left:714px;top:436.7px;width:258px;height:1px;background:#eceef2"></div>
<svg style="left:745.4px;top:420.3px" width="8" height="8" viewBox="0 0 8 8"><rect x=".5" y=".5" width="7" height="7" rx=".8" fill="none" stroke="#3b4150" stroke-width=".9"/><path d="M.5 4H7.5M4 .5V7.5" stroke="#3b4150" stroke-width=".9"/></svg>
<svg style="left:758.9px;top:420.3px" width="9" height="8" viewBox="0 0 9 8"><path d="M.6 6.600V1.200Q.6 .6 1.200 .6H3.200L4.200 1.600H7.800Q8.400 1.600 8.400 2.200V6.600Q8.400 7.200 7.800 7.200H1.200Q.6 7.200 .6 6.600Z" fill="none" stroke="#3b4150" stroke-width=".9" stroke-linejoin="round"/></svg>
<div class="t" style="left:773.6px;top:418.3px;font-size:9.1px;color:#3b4150;letter-spacing:0.28px;">Топ каналов</div>
<div class="abs" style="left:714px;top:462.6px;width:258px;height:1px;background:#eceef2"></div>
<svg style="left:745.4px;top:446.2px" width="8" height="8" viewBox="0 0 8 8"><rect x=".5" y=".5" width="7" height="7" rx=".8" fill="none" stroke="#3b4150" stroke-width=".9"/><path d="M.5 4H7.5M4 .5V7.5" stroke="#3b4150" stroke-width=".9"/></svg>
<svg style="left:758.9px;top:446.2px" width="9" height="8" viewBox="0 0 9 8"><path d="M.6 6.600V1.200Q.6 .6 1.200 .6H3.200L4.200 1.600H7.800Q8.400 1.600 8.400 2.200V6.600Q8.400 7.200 7.800 7.200H1.200Q.6 7.200 .6 6.600Z" fill="none" stroke="#3b4150" stroke-width=".9" stroke-linejoin="round"/></svg>
<div class="t" style="left:773.6px;top:444.2px;font-size:9.1px;color:#3b4150;letter-spacing:0.44px;">Топ классов</div>
<div class="abs" style="left:714px;top:488.5px;width:258px;height:1px;background:#eceef2"></div>
<svg style="left:745.4px;top:472.1px" width="8" height="8" viewBox="0 0 8 8"><rect x=".5" y=".5" width="7" height="7" rx=".8" fill="none" stroke="#3b4150" stroke-width=".9"/><path d="M.5 4H7.5M4 .5V7.5" stroke="#3b4150" stroke-width=".9"/></svg>
<svg style="left:758.9px;top:472.1px" width="9" height="8" viewBox="0 0 9 8"><path d="M.6 6.600V1.200Q.6 .6 1.200 .6H3.200L4.200 1.600H7.800Q8.400 1.600 8.400 2.200V6.600Q8.400 7.200 7.800 7.200H1.200Q.6 7.200 .6 6.600Z" fill="none" stroke="#3b4150" stroke-width=".9" stroke-linejoin="round"/></svg>
<div class="t" style="left:773.6px;top:470.1px;font-size:9.1px;color:#3b4150;letter-spacing:0.14px;">Топ GTP cells</div>
<div class="abs" style="left:714px;top:514.4px;width:258px;height:1px;background:#eceef2"></div>
<svg style="left:732.6px;top:498.0px" width="8" height="8" viewBox="0 0 8 8"><rect x=".5" y=".5" width="7" height="7" rx=".8" fill="none" stroke="#3b4150" stroke-width=".9"/><path d="M.5 4H7.5M4 .5V7.5" stroke="#3b4150" stroke-width=".9"/></svg>
<svg style="left:746.1px;top:498.0px" width="9" height="8" viewBox="0 0 9 8"><path d="M.6 6.600V1.200Q.6 .6 1.200 .6H3.200L4.200 1.600H7.800Q8.400 1.600 8.400 2.200V6.600Q8.400 7.200 7.800 7.200H1.200Q.6 7.200 .6 6.600Z" fill="none" stroke="#3b4150" stroke-width=".9" stroke-linejoin="round"/></svg>
<div class="t" style="left:760.8px;top:496.0px;font-size:9.1px;color:#3b4150;letter-spacing:0.36px;">Топ с высоким % ретрансмитов</div>
</div>
<div id="ov"></div>
<div id="modal"><div class="in">
<div class="abs" style="left:199px;top:10px;width:5.500px;height:362px;background:#fafbfc;border-left:1px solid #eef0f5;border-right:1px solid #eef0f5"></div>
<svg style="left:18px;top:19px" width="7" height="9" viewBox="0 0 7 9"><rect x=".5" y=".5" width="6" height="8" rx=".8" fill="none" stroke="#2779d4" stroke-width=".9"/><path d="M2 .5V3H5V.5M2 6.500H5M3.500 5V8" fill="none" stroke="#2779d4" stroke-width=".8"/></svg>
<div class="t" style="left:31px;top:18.2px;font-size:9.6px;color:#2779d4;letter-spacing:0.06px;">Сохраненные</div>
<svg style="left:126px;top:18.5px" width="9" height="9" viewBox="0 0 9 9"><path d="M1.500 2.300A3.600 3.600 0 1 1 1 5.500M.6 .8V2.600H2.400" fill="none" stroke="#2f3440" stroke-width=".9"/><path d="M4.600 2.600V4.800L6 5.600" fill="none" stroke="#2f3440" stroke-width=".8"/></svg>
<div class="t" style="left:140px;top:18.2px;font-size:9.6px;color:#2f3440;letter-spacing:0.04px;">История</div>
<div class="abs" style="left:5.5px;top:35.5px;width:193.500px;height:1px;background:#e6ebf5"></div>
<div class="abs" style="left:5.5px;top:34.7px;width:97px;height:1.600px;background:#2779d4"></div>
<svg style="left:14.5px;top:47px" width="7" height="7" viewBox="0 0 7 7"><path d="M0 3.500H7M3.500 0V7" stroke="#2f3440" stroke-width="1"/></svg>
<svg style="left:181px;top:46px" width="9" height="9" viewBox="0 0 9 9"><path d="M1 3.800A3.500 3.500 0 0 1 7.600 2.600M8 5.200A3.500 3.500 0 0 1 1.400 6.400M7.900 .6V2.800H5.700M1.100 8.400V6.200H3.300" fill="none" stroke="#2f3440" stroke-width=".9"/></svg>
<div class="abs" style="left:5.5px;top:63.5px;width:193.500px;height:1px;background:#e9edf5"></div>
<div class="abs" style="left:26px;top:64px;width:0;height:54px;border-left:1px dotted #e6e9ef"></div>
<div class="abs" style="left:178px;top:64px;width:0;height:54px;border-left:1px dotted #e6e9ef"></div>
<div class="t" style="left:31.6px;top:69.7px;font-size:8.8px;color:#23262d;font-weight:700;letter-spacing:-0.13px;">Название</div>
<svg style="left:39px;top:101.5px" width="8" height="9" viewBox="0 0 8 9"><circle cx="3.300" cy="3.300" r="2.800" fill="none" stroke="#a9afbb" stroke-width=".9"/><path d="M5.300 5.400L7.500 8.200" stroke="#a9afbb" stroke-width=".9"/></svg>
<div class="t" style="left:48px;top:100px;font-size:8.5px;color:#a9afbb;font-family:'Liberation Serif',serif;letter-spacing:-0.02px;">Фильтр</div>
<div class="abs" style="left:32px;top:116px;width:140px;height:1px;background:#d5dcea"></div>
<div class="abs" style="left:5.5px;top:353px;width:193.500px;height:1px;background:#e9edf5"></div>
<svg style="left:211px;top:14.5px" width="9" height="8" viewBox="0 0 9 8"><path d="M3 1H9M3 4H9M3 7H9" stroke="#2779d4" stroke-width="1.100"/><path d="M0 1H1.600M0 4H1.600M0 7H1.600" stroke="#2779d4" stroke-width="1.300"/></svg>
<div class="t" style="left:225.4px;top:12.3px;font-size:9.2px;color:#2779d4;letter-spacing:0.36px;">Фильтры</div>
<div class="abs" style="left:204.5px;top:36px;width:386.500px;height:1px;background:#e9edf5"></div>
<svg style="left:213.5px;top:47px" width="7" height="7" viewBox="0 0 7 7"><path d="M0 3.500H7M3.500 0V7" stroke="#2f3440" stroke-width="1"/></svg>
<svg style="left:235.5px;top:46.5px" width="10" height="8" viewBox="0 0 10 8"><path d="M1 4V3.500Q1 2 2.500 2H8.500M7 .5L8.500 2L7 3.500M9 4V4.500Q9 6 7.500 6H1.500M3 4.500L1.500 6L3 7.500" fill="none" stroke="#2f3440" stroke-width=".9"/></svg>
<svg style="left:261px;top:46px" width="7" height="9" viewBox="0 0 7 9"><path d="M0 1.800H7M2.300 1.800V.6H4.700V1.800M.8 1.800V7.800Q.8 8.500 1.500 8.500H5.500Q6.200 8.500 6.200 7.800V1.800M2.600 3.300V7M4.400 3.300V7" fill="none" stroke="#2f3440" stroke-width=".8"/></svg>
<div class="t" style="left:485px;top:45px;font-size:9.3px;color:#2779d4;font-weight:700;letter-spacing:-0.20px;">Сохранить фильтр</div>
<div class="abs" style="left:204.5px;top:64px;width:386.500px;height:1px;background:#e9edf5"></div>
<div class="t" style="left:262.6px;top:69.5px;font-size:8.48px;color:#23262d;font-weight:700;letter-spacing:-0.27px;">Фильтр</div>
<div class="t" style="left:331px;top:69.5px;font-size:8.8px;color:#23262d;font-weight:700;letter-spacing:-0.08px;">Оператор</div>
<div class="t" style="left:396.4px;top:69.5px;font-size:8.8px;color:#23262d;font-weight:700;letter-spacing:-0.14px;">Значение</div>
<div class="abs" style="left:204.5px;top:64px;width:386.500px;height:308.300px;overflow:hidden">
<svg style="left:5.5px;top:36.0px" width="8" height="8" viewBox="0 0 8 8"><rect x=".5" y=".5" width="7" height="7" rx="1" fill="none" stroke="#b5bbc7" stroke-width=".9"/></svg>
<div class="t" style="left:24.0px;top:34.0px;font-size:8.9px;color:#a3a9b6;letter-spacing:0.21px;">Выкл.</div>
<div class="t" style="left:58.0px;top:34.0px;font-size:8.9px;color:#2f3440;letter-spacing:0.18px;">Хост</div>
<div class="t" style="left:126.5px;top:34.0px;font-size:8.9px;color:#2f3440;letter-spacing:0.32px;">like</div>
<svg style="left:329.5px;top:36.0px" width="8" height="8" viewBox="0 0 8 8"><circle cx="4" cy="4" r="3.500" fill="none" stroke="#2f3440" stroke-width=".8"/><path d="M2.700 3.100Q2.700 1.900 4 1.900Q5.300 1.900 5.300 3Q5.300 3.800 4 4.300V5" fill="none" stroke="#2f3440" stroke-width=".85"/><circle cx="4" cy="6.100" r=".5" fill="#2f3440"/></svg>
<svg style="left:370.5px;top:35.0px" width="8" height="9" viewBox="0 0 8 9"><path d="M.3 1.800H7.700M2.600 1.800V.6H5.400V1.800M1.200 1.800V7.600Q1.200 8.500 2.100 8.500H5.900Q6.800 8.500 6.800 7.600V1.800" fill="none" stroke="#2f3440" stroke-width=".9"/></svg>
<div class="abs" style="left:0;top:52.1px;width:386.500px;height:1px;background:#edf0f6"></div>
<svg style="left:5.5px;top:61.9px" width="8" height="8" viewBox="0 0 8 8"><rect x=".5" y=".5" width="7" height="7" rx="1" fill="none" stroke="#2779d4" stroke-width=".9"/><path d="M2 4L3.500 5.500L6 2.500" fill="none" stroke="#2779d4" stroke-width=".9"/></svg>
<div class="t" style="left:24.0px;top:59.9px;font-size:8.9px;color:#2779d4;letter-spacing:0.24px;">Вкл.</div>
<div class="t" style="left:58.0px;top:59.9px;font-size:8.9px;color:#2f3440;letter-spacing:0.35px;">Абонент</div>
<div class="t" style="left:126.5px;top:59.9px;font-size:8.9px;color:#2f3440;letter-spacing:0.32px;">like</div>
<div class="t" style="left:191.9px;top:59.9px;font-size:8.9px;color:#2f3440;letter-spacing:-0.18px;">185.104.5.225</div>
<svg style="left:329.5px;top:61.9px" width="8" height="8" viewBox="0 0 8 8"><circle cx="4" cy="4" r="3.500" fill="none" stroke="#2f3440" stroke-width=".8"/><path d="M2.700 3.100Q2.700 1.900 4 1.900Q5.300 1.900 5.300 3Q5.300 3.800 4 4.300V5" fill="none" stroke="#2f3440" stroke-width=".85"/><circle cx="4" cy="6.100" r=".5" fill="#2f3440"/></svg>
<svg style="left:350.5px;top:60.9px" width="10" height="9" viewBox="0 0 10 9"><path d="M9.500 .6L5 4M5.300 3.100Q6.500 5 4.500 7.200Q2.800 8.800 .7 8Q1.600 6.400 2 5Q2.700 2.900 5.300 3.100Z" fill="none" stroke="#2f3440" stroke-width=".9"/></svg>
<svg style="left:370.5px;top:60.9px" width="8" height="9" viewBox="0 0 8 9"><path d="M.3 1.800H7.700M2.600 1.800V.6H5.400V1.800M1.200 1.800V7.600Q1.200 8.500 2.100 8.500H5.900Q6.800 8.500 6.800 7.600V1.800" fill="none" stroke="#2f3440" stroke-width=".9"/></svg>
<div class="abs" style="left:0;top:78.0px;width:386.500px;height:1px;background:#edf0f6"></div>
<svg style="left:5.5px;top:87.8px" width="8" height="8" viewBox="0 0 8 8"><rect x=".5" y=".5" width="7" height="7" rx="1" fill="none" stroke="#2779d4" stroke-width=".9"/><path d="M2 4L3.500 5.500L6 2.500" fill="none" stroke="#2779d4" stroke-width=".9"/></svg>
<div class="t" style="left:24.0px;top:85.8px;font-size:8.9px;color:#2779d4;letter-spacing:0.24px;">Вкл.</div>
<div class="t" style="left:58.0px;top:85.8px;font-size:8.9px;color:#2f3440;letter-spacing:0.39px;">Логин</div>
<div class="t" style="left:126.5px;top:85.8px;font-size:8.9px;color:#2f3440;letter-spacing:0.32px;">like</div>
<div class="t" style="left:191.9px;top:85.8px;font-size:8.9px;color:#2f3440;letter-spacing:0.20px;">sub45278</div>
<svg style="left:329.5px;top:87.8px" width="8" height="8" viewBox="0 0 8 8"><circle cx="4" cy="4" r="3.500" fill="none" stroke="#2f3440" stroke-width=".8"/><path d="M2.700 3.100Q2.700 1.900 4 1.900Q5.300 1.900 5.300 3Q5.300 3.800 4 4.300V5" fill="none" stroke="#2f3440" stroke-width=".85"/><circle cx="4" cy="6.100" r=".5" fill="#2f3440"/></svg>
<svg style="left:350.5px;top:86.8px" width="10" height="9" viewBox="0 0 10 9"><path d="M9.500 .6L5 4M5.300 3.100Q6.500 5 4.500 7.200Q2.800 8.800 .7 8Q1.600 6.400 2 5Q2.700 2.900 5.300 3.100Z" fill="none" stroke="#2f3440" stroke-width=".9"/></svg>
<svg style="left:370.5px;top:86.8px" width="8" height="9" viewBox="0 0 8 9"><path d="M.3 1.800H7.700M2.600 1.800V.6H5.400V1.800M1.200 1.800V7.600Q1.200 8.500 2.100 8.500H5.900Q6.800 8.500 6.800 7.600V1.800" fill="none" stroke="#2f3440" stroke-width=".9"/></svg>
<div class="abs" style="left:0;top:104.2px;width:386.500px;height:25.9px;background:#f3f5f9"></div>
<div class="abs" style="left:0;top:103.9px;width:386.500px;height:1px;background:#edf0f6"></div>
<svg style="left:5.5px;top:113.7px" width="8" height="8" viewBox="0 0 8 8"><rect x=".5" y=".5" width="7" height="7" rx="1" fill="none" stroke="#2779d4" stroke-width=".9"/><path d="M2 4L3.500 5.500L6 2.500" fill="none" stroke="#2779d4" stroke-width=".9"/></svg>
<div class="t" style="left:24.0px;top:111.7px;font-size:8.9px;color:#2779d4;letter-spacing:0.24px;">Вкл.</div>
<div class="t" style="left:58.0px;top:111.7px;font-size:8.9px;color:#2f3440;letter-spacing:0.24px;">IP хоста</div>
<div class="t" style="left:126.5px;top:111.7px;font-size:8.9px;color:#2f3440;letter-spacing:0.32px;">like</div>
<div class="t" style="left:191.9px;top:111.7px;font-size:8.9px;color:#2f3440;letter-spacing:-0.04px;">45.14.48.242</div>
<svg style="left:329.5px;top:113.7px" width="8" height="8" viewBox="0 0 8 8"><circle cx="4" cy="4" r="3.500" fill="none" stroke="#2f3440" stroke-width=".8"/><path d="M2.700 3.100Q2.700 1.900 4 1.900Q5.300 1.900 5.300 3Q5.300 3.800 4 4.300V5" fill="none" stroke="#2f3440" stroke-width=".85"/><circle cx="4" cy="6.100" r=".5" fill="#2f3440"/></svg>
<svg style="left:350.5px;top:112.7px" width="10" height="9" viewBox="0 0 10 9"><path d="M9.500 .6L5 4M5.300 3.100Q6.500 5 4.500 7.200Q2.800 8.800 .7 8Q1.600 6.400 2 5Q2.700 2.900 5.300 3.100Z" fill="none" stroke="#2f3440" stroke-width=".9"/></svg>
<svg style="left:370.5px;top:112.7px" width="8" height="9" viewBox="0 0 8 9"><path d="M.3 1.800H7.700M2.600 1.800V.6H5.400V1.800M1.200 1.800V7.600Q1.200 8.500 2.100 8.500H5.900Q6.800 8.500 6.800 7.600V1.800" fill="none" stroke="#2f3440" stroke-width=".9"/></svg>
<div class="abs" style="left:0;top:129.8px;width:386.500px;height:1px;background:#edf0f6"></div>
<svg style="left:5.5px;top:139.6px" width="8" height="8" viewBox="0 0 8 8"><rect x=".5" y=".5" width="7" height="7" rx="1" fill="none" stroke="#b5bbc7" stroke-width=".9"/></svg>
<div class="t" style="left:24.0px;top:137.6px;font-size:8.9px;color:#a3a9b6;letter-spacing:0.21px;">Выкл.</div>
<div class="t" style="left:58.0px;top:137.6px;font-size:8.9px;color:#2f3440;letter-spacing:0.46px;">Протокол</div>
<div class="t" style="left:126.5px;top:137.6px;font-size:8.9px;color:#2f3440;letter-spacing:0.32px;">like</div>
<svg style="left:329.5px;top:139.6px" width="8" height="8" viewBox="0 0 8 8"><circle cx="4" cy="4" r="3.500" fill="none" stroke="#2f3440" stroke-width=".8"/><path d="M2.700 3.100Q2.700 1.900 4 1.900Q5.300 1.900 5.300 3Q5.300 3.800 4 4.300V5" fill="none" stroke="#2f3440" stroke-width=".85"/><circle cx="4" cy="6.100" r=".5" fill="#2f3440"/></svg>
<svg style="left:370.5px;top:138.6px" width="8" height="9" viewBox="0 0 8 9"><path d="M.3 1.800H7.700M2.600 1.800V.6H5.400V1.800M1.200 1.800V7.600Q1.200 8.500 2.100 8.500H5.900Q6.800 8.500 6.800 7.600V1.800" fill="none" stroke="#2f3440" stroke-width=".9"/></svg>
<div class="abs" style="left:0;top:155.7px;width:386.500px;height:1px;background:#edf0f6"></div>
<svg style="left:5.5px;top:165.5px" width="8" height="8" viewBox="0 0 8 8"><rect x=".5" y=".5" width="7" height="7" rx="1" fill="none" stroke="#b5bbc7" stroke-width=".9"/></svg>
<div class="t" style="left:24.0px;top:163.5px;font-size:8.9px;color:#a3a9b6;letter-spacing:0.21px;">Выкл.</div>
<div class="t" style="left:58.0px;top:163.5px;font-size:8.9px;color:#2f3440;width:62.5px;overflow:hidden;letter-spacing:.46px;">Группы прикладных</div>
<div class="t" style="left:126.5px;top:163.5px;font-size:8.9px;color:#2f3440;letter-spacing:0.04px;">in</div>
<svg style="left:370.5px;top:164.5px" width="8" height="9" viewBox="0 0 8 9"><path d="M.3 1.800H7.700M2.600 1.800V.6H5.400V1.800M1.200 1.800V7.600Q1.200 8.500 2.100 8.500H5.900Q6.800 8.500 6.800 7.600V1.800" fill="none" stroke="#2f3440" stroke-width=".9"/></svg>
<div class="abs" style="left:0;top:181.6px;width:386.500px;height:1px;background:#edf0f6"></div>
<svg style="left:5.5px;top:191.4px" width="8" height="8" viewBox="0 0 8 8"><rect x=".5" y=".5" width="7" height="7" rx="1" fill="none" stroke="#b5bbc7" stroke-width=".9"/></svg>
<div class="t" style="left:24.0px;top:189.4px;font-size:8.9px;color:#a3a9b6;letter-spacing:0.21px;">Выкл.</div>
<div class="t" style="left:58.0px;top:189.4px;font-size:8.9px;color:#2f3440;width:62.5px;overflow:hidden;letter-spacing:.46px;">Прикладной протокол</div>
<div class="t" style="left:126.5px;top:189.4px;font-size:8.9px;color:#2f3440;letter-spacing:0.32px;">like</div>
<svg style="left:329.5px;top:191.4px" width="8" height="8" viewBox="0 0 8 8"><circle cx="4" cy="4" r="3.500" fill="none" stroke="#2f3440" stroke-width=".8"/><path d="M2.700 3.100Q2.700 1.900 4 1.900Q5.300 1.900 5.300 3Q5.300 3.800 4 4.300V5" fill="none" stroke="#2f3440" stroke-width=".85"/><circle cx="4" cy="6.100" r=".5" fill="#2f3440"/></svg>
<svg style="left:370.5px;top:190.4px" width="8" height="9" viewBox="0 0 8 9"><path d="M.3 1.800H7.700M2.600 1.800V.6H5.400V1.800M1.200 1.800V7.600Q1.200 8.500 2.100 8.500H5.900Q6.800 8.500 6.800 7.600V1.800" fill="none" stroke="#2f3440" stroke-width=".9"/></svg>
<div class="abs" style="left:0;top:207.5px;width:386.500px;height:1px;background:#edf0f6"></div>
<svg style="left:5.5px;top:217.3px" width="8" height="8" viewBox="0 0 8 8"><rect x=".5" y=".5" width="7" height="7" rx="1" fill="none" stroke="#b5bbc7" stroke-width=".9"/></svg>
<div class="t" style="left:24.0px;top:215.3px;font-size:8.9px;color:#a3a9b6;letter-spacing:0.21px;">Выкл.</div>
<div class="t" style="left:58.0px;top:215.3px;font-size:8.9px;color:#2f3440;width:62.5px;overflow:hidden;letter-spacing:.46px;">Номер АС абонента</div>
<div class="t" style="left:126.5px;top:215.3px;font-size:8.9px;color:#2f3440;letter-spacing:0.32px;">like</div>
<svg style="left:329.5px;top:217.3px" width="8" height="8" viewBox="0 0 8 8"><circle cx="4" cy="4" r="3.500" fill="none" stroke="#2f3440" stroke-width=".8"/><path d="M2.700 3.100Q2.700 1.900 4 1.900Q5.300 1.900 5.300 3Q5.300 3.800 4 4.300V5" fill="none" stroke="#2f3440" stroke-width=".85"/><circle cx="4" cy="6.100" r=".5" fill="#2f3440"/></svg>
<svg style="left:370.5px;top:216.3px" width="8" height="9" viewBox="0 0 8 9"><path d="M.3 1.800H7.700M2.600 1.800V.6H5.400V1.800M1.200 1.800V7.600Q1.200 8.500 2.100 8.500H5.900Q6.800 8.500 6.800 7.600V1.800" fill="none" stroke="#2f3440" stroke-width=".9"/></svg>
<div class="abs" style="left:0;top:233.4px;width:386.500px;height:1px;background:#edf0f6"></div>
<svg style="left:5.5px;top:243.2px" width="8" height="8" viewBox="0 0 8 8"><rect x=".5" y=".5" width="7" height="7" rx="1" fill="none" stroke="#b5bbc7" stroke-width=".9"/></svg>
<div class="t" style="left:24.0px;top:241.2px;font-size:8.9px;color:#a3a9b6;letter-spacing:0.21px;">Выкл.</div>
<div class="t" style="left:58.0px;top:241.2px;font-size:8.9px;color:#2f3440;width:62.5px;overflow:hidden;letter-spacing:.46px;">Номер АС хоста</div>
<div class="t" style="left:126.5px;top:241.2px;font-size:8.9px;color:#2f3440;letter-spacing:0.32px;">like</div>
<svg style="left:329.5px;top:243.2px" width="8" height="8" viewBox="0 0 8 8"><circle cx="4" cy="4" r="3.500" fill="none" stroke="#2f3440" stroke-width=".8"/><path d="M2.700 3.100Q2.700 1.900 4 1.900Q5.300 1.900 5.300 3Q5.300 3.800 4 4.300V5" fill="none" stroke="#2f3440" stroke-width=".85"/><circle cx="4" cy="6.100" r=".5" fill="#2f3440"/></svg>
<svg style="left:370.5px;top:242.2px" width="8" height="9" viewBox="0 0 8 9"><path d="M.3 1.800H7.700M2.600 1.800V.6H5.400V1.800M1.200 1.800V7.600Q1.200 8.500 2.100 8.500H5.900Q6.800 8.500 6.800 7.600V1.800" fill="none" stroke="#2f3440" stroke-width=".9"/></svg>
<div class="abs" style="left:0;top:259.3px;width:386.500px;height:1px;background:#edf0f6"></div>
<svg style="left:5.5px;top:269.1px" width="8" height="8" viewBox="0 0 8 8"><rect x=".5" y=".5" width="7" height="7" rx="1" fill="none" stroke="#b5bbc7" stroke-width=".9"/></svg>
<div class="t" style="left:24.0px;top:267.1px;font-size:8.9px;color:#a3a9b6;letter-spacing:0.21px;">Выкл.</div>
<div class="t" style="left:58.0px;top:267.1px;font-size:8.9px;color:#2f3440;width:62.5px;overflow:hidden;letter-spacing:.46px;">Категория хоста</div>
<div class="t" style="left:126.5px;top:267.1px;font-size:8.9px;color:#2f3440;letter-spacing:0.04px;">in</div>
<svg style="left:370.5px;top:268.1px" width="8" height="9" viewBox="0 0 8 9"><path d="M.3 1.800H7.700M2.600 1.800V.6H5.400V1.800M1.200 1.800V7.600Q1.200 8.500 2.100 8.500H5.900Q6.800 8.500 6.800 7.600V1.800" fill="none" stroke="#2f3440" stroke-width=".9"/></svg>
<div class="abs" style="left:0;top:285.2px;width:386.500px;height:1px;background:#edf0f6"></div>
<svg style="left:5.5px;top:295.0px" width="8" height="8" viewBox="0 0 8 8"><rect x=".5" y=".5" width="7" height="7" rx="1" fill="none" stroke="#b5bbc7" stroke-width=".9"/></svg>
<div class="t" style="left:24.0px;top:293.0px;font-size:8.9px;color:#a3a9b6;letter-spacing:0.21px;">Выкл.</div>
<div class="t" style="left:58.0px;top:293.0px;font-size:8.9px;color:#2f3440;width:62.5px;overflow:hidden;letter-spacing:.46px;">Категория зараженного</div>
<div class="t" style="left:126.5px;top:293.0px;font-size:8.9px;color:#2f3440;letter-spacing:0.04px;">in</div>
<svg style="left:370.5px;top:294.0px" width="8" height="9" viewBox="0 0 8 9"><path d="M.3 1.800H7.700M2.600 1.800V.6H5.400V1.800M1.200 1.800V7.600Q1.200 8.500 2.100 8.500H5.900Q6.800 8.500 6.800 7.600V1.800" fill="none" stroke="#2f3440" stroke-width=".9"/></svg>
<div class="abs" style="left:51.2px;top:0;width:0;height:309px;border-left:1px dotted #eceef4"></div>
<div class="abs" style="left:121.0px;top:0;width:0;height:309px;border-left:1px dotted #eceef4"></div>
<div class="abs" style="left:185.5px;top:0;width:0;height:309px;border-left:1px dotted #eceef4"></div>
<div class="abs" style="left:323.5px;top:0;width:0;height:309px;border-left:1px dotted #eceef4"></div>
<div class="abs" style="left:344.5px;top:0;width:0;height:309px;border-left:1px dotted #eceef4"></div>
<div class="abs" style="left:365.5px;top:0;width:0;height:309px;border-left:1px dotted #eceef4"></div>
</div>
<div class="abs" style="left:5.5px;top:372px;width:585.500px;height:1px;background:#e9edf5"></div>
<svg style="left:32.8px;top:389.5px" width="8" height="8" viewBox="0 0 8 8"><circle cx="4" cy="4" r="3.500" fill="none" stroke="#2f3440" stroke-width=".8"/><path d="M2.700 3.100Q2.700 1.900 4 1.900Q5.300 1.900 5.300 3Q5.300 3.800 4 4.300V5" fill="none" stroke="#2f3440" stroke-width=".85"/><circle cx="4" cy="6.100" r=".5" fill="#2f3440"/></svg>
<div class="t" style="left:47.5px;top:388px;font-size:9.22px;color:#23262d;font-weight:700;letter-spacing:-0.32px;">Помощь</div>
<div class="t" style="left:438px;top:388.2px;font-size:9.3px;color:#23262d;font-weight:700;letter-spacing:-0.24px;">Отменить</div>
<div class="t" style="left:515px;top:388.2px;font-size:9.3px;color:#2779d4;font-weight:700;letter-spacing:-0.19px;">Применить</div>
</div></div>
<div class="red" style="left:30.4px;top:203.700px;width:170.800px;height:28.700px"></div>
<div class="red" style="left:218.100px;top:48.400px;width:252.100px;height:28.600px"></div>
<div class="red" style="left:803.800px;top:50.500px;width:24.500px;height:24.200px"></div>
<div class="red" style="left:503px;top:183px;width:393.400px;height:84.800px"></div>
</body>
</html>
